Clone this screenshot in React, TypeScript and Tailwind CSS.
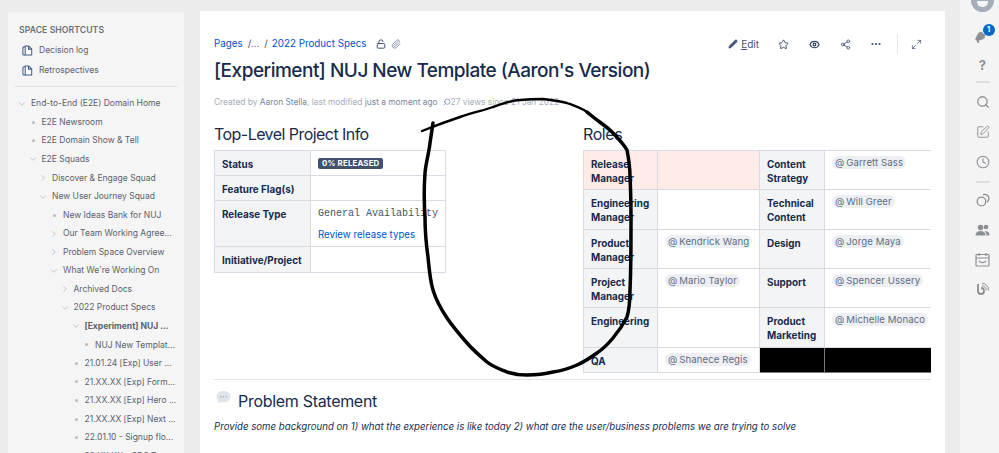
import React from "react";
import { ChevronDown, ChevronRight, Pencil, Star, Eye, Share2, MoreHorizontal, Maximize2, Search, SquarePen, Clock, Paperclip, LockOpen } from "lucide-react";

type Row = { t: string; d: number; k: "o" | "c" | "b"; bold?: boolean };
const rows: Row[] = [
  { t: "End-to-End (E2E) Domain Home", d: 0, k: "o" },
  { t: "E2E Newsroom", d: 1, k: "b" },
  { t: "E2E Domain Show & Tell", d: 1, k: "b" },
  { t: "E2E Squads", d: 1, k: "o" },
  { t: "Discover & Engage Squad", d: 2, k: "c" },
  { t: "New User Journey Squad", d: 2, k: "o" },
  { t: "New Ideas Bank for NUJ", d: 3, k: "b" },
  { t: "Our Team Working Agree...", d: 3, k: "c" },
  { t: "Problem Space Overview", d: 3, k: "c" },
  { t: "What We're Working On", d: 3, k: "o" },
  { t: "Archived Docs", d: 4, k: "c" },
  { t: "2022 Product Specs", d: 4, k: "o" },
  { t: "[Experiment] NUJ ...", d: 5, k: "o", bold: true },
  { t: "NUJ New Templat...", d: 6, k: "b" },
  { t: "21.01.24 [Exp] User ...", d: 5, k: "b" },
  { t: "21.XX.XX [Exp] Form...", d: 5, k: "b" },
  { t: "21.XX.XX [Exp] Hero ...", d: 5, k: "b" },
  { t: "21.XX.XX [Exp] Next ...", d: 5, k: "b" },
  { t: "22.01.10 - Signup flo...", d: 5, k: "b" },
  { t: "22.XX.XX - SDS Tr...", d: 5, k: "b" },
];

const pad: Record<number, string> = {
  0: "pl-[23px]",
  1: "pl-[33.5px]",
  2: "pl-[44px]",
  3: "pl-[55px]",
  4: "pl-[65.5px]",
  5: "pl-[76.5px]",
  6: "pl-[87px]",
};

function PagesIcon() {
  return (
    <svg width="11" height="11" viewBox="0 0 12 12" fill="none" stroke="#42598a" strokeWidth="1.1">
      <path d="M3.5 2H2.2Q1 2 1 3.2v6.6Q1 11 2.2 11h1.3" />
      <path d="M3.5 1.2h3.8L10.6 4.3v6.7H3.5z" fill="#fff" />
      <path d="M7 1.2v3.3h3.6" />
    </svg>
  );
}

function Side() {
  return (
    <aside className="ml-[8px] mt-[12px] w-[176px] h-[441px] bg-[#f5f5f6] overflow-hidden border-t border-[#f0f0f1]">
      <div className="pl-[11px] pt-[10px] h-[14px] box-content text-[8.6px] font-semibold text-[#6b6f76] tracking-[0.1px] leading-[14px]">SPACE SHORTCUTS</div>
      <div className="mt-[3px] flex flex-col">
        {["Decision log", "Retrospectives"].map((t) => (
          <div key={t} className="h-[20.5px] flex items-center pl-[14px] gap-[6px] text-[8.5px] text-[#5c616a]">
            <PagesIcon />
            <span>{t}</span>
          </div>
        ))}
      </div>
      <div className="mx-[7px] mt-[5px] h-px bg-[#dfe1e4]" />
      <div className="mt-[7.5px] flex flex-col">
        {rows.map((r) => (
          <div key={r.t} className={`relative h-[18.56px] shrink-0 flex items-center whitespace-nowrap text-[8.5px] text-[#5c616a] ${pad[r.d]} ${r.bold ? "font-bold" : ""}`}>
            <span className="absolute -ml-[14px] w-[10px] h-[10px] flex items-center justify-center text-[#9a9ea5]">
              {r.k === "o" && <ChevronDown size={10} strokeWidth={1.3} />}
              {r.k === "c" && <ChevronRight size={10} strokeWidth={1.3} />}
              {r.k === "b" && <span className="ml-[1px] w-[3px] h-[3px] rounded-full bg-[#b9bcc1]" />}
            </span>
            <span>{r.t}</span>
          </div>
        ))}
      </div>
    </aside>
  );
}

function Th({ children, className = "" }: { children?: React.ReactNode; className?: string }) {
  return <td className={`border border-[#d8dbe3] bg-[#f3f4f6] pl-[7px] pr-[2px] pt-[6px] align-top font-bold text-[#172b4d] text-[9.9px] leading-[14px] ${className}`}>{children}</td>;
}
function Td({ children, className = "" }: { children?: React.ReactNode; className?: string }) {
  return <td className={`border border-[#d8dbe3] pl-[7px] pt-[5px] align-top text-[#42526e] text-[9.7px] leading-[14px] ${className}`}>{children}</td>;
}
function Mention({ n }: { n: string }) {
  return <span className="inline-block whitespace-nowrap rounded-[7px] bg-[#eeeff2] px-[3px] h-[13px] leading-[13px] text-[9.6px] tracking-[0.1px] text-[#5e6c84]">@{"\u2009"}{n}</span>;
}

function LeftTable() {
  return (
    <table className="w-[232px] mt-[4px] border-collapse table-fixed">
      <colgroup>
        <col className="w-[96px]" />
        <col />
      </colgroup>
      <tbody>
        <tr className="h-[25px]">
          <Th>Status</Th>
          <Td className="pt-[7px]">
            <span className="inline-block h-[11px] rounded-[2px] bg-[#42526e] px-[4px] text-[7.8px] leading-[11px] font-bold text-white tracking-[0.2px] align-top">0% RELEASED</span>
          </Td>
        </tr>
        <tr className="h-[25px]">
          <Th>Feature Flag(s)</Th>
          <Td />
        </tr>
        <tr className="h-[46px]">
          <Th>Release Type</Th>
          <Td className="pt-[6px]">
            <div className="font-['Liberation_Mono',monospace] text-[#42526e] text-[10px] whitespace-nowrap leading-[14px]">General Availability</div>
            <div className="mt-[7px] text-[#0052cc]">Review release types</div>
          </Td>
        </tr>
        <tr className="h-[26px]">
          <Th>Initiative/Project</Th>
          <Td />
        </tr>
      </tbody>
    </table>
  );
}

function RightTable() {
  return (
    <div className="w-[348px] overflow-hidden mt-[4px]">
      <table className="w-[360px] border-collapse table-fixed">
        <colgroup>
          <col className="w-[74px]" />
          <col className="w-[102px]" />
          <col className="w-[65px]" />
          <col />
        </colgroup>
        <tbody>
          <tr className="h-[39px]">
            <Th className="!bg-[#ffebe6]">Release<br />Manager</Th>
            <Td className="bg-[#ffebe6]" />
            <Th>Content<br />Strategy</Th>
            <Td><Mention n="Garrett Sass" /></Td>
          </tr>
          <tr className="h-[39.5px]">
            <Th>Engineering<br />Manager</Th>
            <Td />
            <Th>Technical<br />Content</Th>
            <Td><Mention n="Will Greer" /></Td>
          </tr>
          <tr className="h-[39.5px]">
            <Th>Product<br />Manager</Th>
            <Td><Mention n="Kendrick Wang" /></Td>
            <Th>Design</Th>
            <Td><Mention n="Jorge Maya" /></Td>
          </tr>
          <tr className="h-[39px]">
            <Th>Project<br />Manager</Th>
            <Td><Mention n="Mario Taylor" /></Td>
            <Th>Support</Th>
            <Td><Mention n="Spencer Ussery" /></Td>
          </tr>
          <tr className="h-[39.5px]">
            <Th>Engineering</Th>
            <Td />
            <Th>Product<br />Marketing</Th>
            <Td><Mention n="Michelle Monaco" /></Td>
          </tr>
          <tr className="h-[25.5px]">
            <Th>QA</Th>
            <Td><Mention n="Shanece Regis" /></Td>
            <td className="bg-black border border-[#777]" />
            <td className="bg-black border border-[#777]" />
          </tr>
        </tbody>
      </table>
    </div>
  );
}

function Main() {
  return (
    <main className="ml-[16px] mt-[11px] w-[745px] h-[442px] bg-white px-[14px] overflow-hidden">
      <div className="mt-[25px] h-[16px] flex items-center text-[9.8px] text-[#0052cc] whitespace-nowrap">
        <span>Pages</span>
        <span className="ml-[5px] text-[#42526e]">/...</span>
        <span className="ml-[5px] text-[#42526e]">/</span>
        <span className="ml-[4px]">2022 Product Specs</span>
        <LockOpen size={10} strokeWidth={2.4} className="ml-[10px] text-[#42526e]" />
        <Paperclip size={10} strokeWidth={2} className="ml-[5px] text-[#7a869a]" />
        <div className="ml-auto mr-[9px] flex items-center text-[#42526e]">
          <Pencil size={10} fill="#42526e" strokeWidth={1.5} className="mr-[3px]" />
          <span className="underline-offset-1 text-[10px]"><span className="underline">E</span>dit</span>
          <Star size={11} strokeWidth={1.8} className="ml-[19px] text-[#253858]" />
          <Eye size={11} strokeWidth={2.4} className="ml-[20px] text-[#253858]" />
          <Share2 size={11} strokeWidth={1.8} className="ml-[20px] text-[#42526e]" />
          <MoreHorizontal size={12} strokeWidth={2.4} className="ml-[19px] text-[#42526e]" />
          <span className="ml-[15px] w-px h-[21px] bg-[#e4e6ea]" />
          <Maximize2 size={11} strokeWidth={1.6} className="ml-[13px] text-[#42526e]" />
        </div>
      </div>
      <h1 className="mt-[6px] h-[26px] leading-[26px] text-[19px] tracking-[-0.5px] font-medium text-[#172b4d] whitespace-nowrap">[Experiment] NUJ New Template (Aaron's Version)</h1>
      <div className="mt-[12px] h-[12px] leading-[12px] flex items-center text-[8.35px] text-[#a5adba] whitespace-nowrap">
        <span>Created by&nbsp;</span>
        <span className="text-[#7a869a]">Aaron Stella</span>
        <span>, last modified&nbsp;</span>
        <span className="text-[#7a869a]">just a moment ago</span>
        <Search size={8} strokeWidth={2} className="ml-[5px] -scale-x-100 text-[#5b7fc7]" />
        <span>27 views since 21 Jan 2022</span>
      </div>
      <div className="mt-[14px] flex">
        <section className="w-[369px]">
          <h2 className="h-[24px] leading-[24px] text-[16px] tracking-[-0.55px] text-[#172b4d] whitespace-nowrap">Top-Level Project Info</h2>
          <LeftTable />
        </section>
        <section>
          <h2 className="h-[24px] leading-[24px] text-[16px] tracking-[-0.4px] text-[#172b4d]">Roles</h2>
          <RightTable />
        </section>
      </div>
      <div className="mt-[6px] h-px bg-[#e2e3e6] w-[717px]" />
      <div className="mt-[9px] h-[24px] flex items-center">
        <svg width="17" height="16" viewBox="0 0 15 15" className="mr-[6px] ml-[1px] -mt-[6px]">
          <path d="M7.5 1C11 1 14 3.2 14 6.3S11 11.6 7.5 11.600c-.8 0-1.500-.1-2.200-.3L2.600 13l.4-2.900C1.800 9.100 1 7.800 1 6.300 1 3.200 4 1 7.500 1z" fill="#dfe5e9" />
          <circle cx="5" cy="6.300" r=".6" fill="#9aa6b0" />
          <circle cx="7.500" cy="6.300" r=".6" fill="#9aa6b0" />
          <circle cx="10" cy="6.300" r=".6" fill="#9aa6b0" />
        </svg>
        <h2 className="text-[16px] tracking-[-0.3px] text-[#172b4d] whitespace-nowrap">Problem Statement</h2>
      </div>
      <p className="mt-[7px] h-[14px] leading-[14px] italic text-[9.67px] text-[#172b4d] whitespace-nowrap">Provide some background on 1) what the experience is like today 2) what are the user/business problems we are trying to solve</p>
    </main>
  );
}

function Nav() {
  const c = "#8b8f94";
  return (
    <nav className="ml-[15px] w-[39px] h-[453px] pl-[6px] bg-[#f4f4f5] flex flex-col items-center relative">
      <div className="h-[12px] w-[23px] rounded-b-full bg-[#a5adba] flex justify-center overflow-hidden">
        <span className="mt-[1px] w-[11px] h-[6px] rounded-b-[5px] bg-[#f4f4f5]" />
      </div>
      <div className="relative mt-[15px] h-[16px] w-[16px] flex items-center justify-center">
        <svg width="15" height="15" viewBox="0 0 14 14" fill={c} className="-ml-[4px] mt-[3px]">
          <path d="M5 3.500l5.500 5.500-6.500 2.500-2-2z" />
          <path d="M5 3.500l3-1 3.500 3.500-1 3z" />
          <path d="M3.500 11.500l1.800-.7.700 1.700-1.500.5z" />
        </svg>
        <span className="absolute left-[8px] -top-[3px] w-[12px] h-[12px] rounded-full bg-[#0c66c2] text-white text-[7.5px] leading-[12px] text-center font-bold">1</span>
      </div>
      <span className="mt-[13px] h-[18px] leading-[18px] text-[13px] font-bold text-[#8b8f94]">?</span>
      <span className="mt-[7px] w-[14px] h-[2px] rounded bg-[#dcdde0]" />
      <Search size={14} strokeWidth={2.2} color={c} className="mt-[12px]" />
      <SquarePen size={14} strokeWidth={1.6} color={c} className="mt-[16px]" />
      <Clock size={14} strokeWidth={1.8} color={c} className="mt-[16px]" />
      <span className="mt-[12px] w-[14px] h-[2px] rounded bg-[#dcdde0]" />
      <svg width="14" height="14" viewBox="0 0 14 14" fill="none" stroke={c} strokeWidth="1.3" className="mt-[10px]">
        <circle cx="5.500" cy="8.500" r="4.300" />
        <path d="M7 1.800a4.300 4.300 0 0 1 6 3.800 4.300 4.300 0 0 1-2.200 3.700" />
      </svg>
      <svg width="15" height="14" viewBox="0 0 15 14" fill={c} className="mt-[16px]">
        <circle cx="5.500" cy="4.500" r="2.800" />
        <path d="M.5 12.500c0-3 2-4.500 5-4.500s5 1.500 5 4.500z" />
        <circle cx="11" cy="4" r="2.300" />
        <path d="M11.500 12.500h3c0-3-1.400-4.300-3.700-4.300-.5 0-.9 0-1.300.2 1.300 1 2 2.300 2 4.100z" />
      </svg>
      <svg width="15" height="15" viewBox="0 0 15 15" fill="none" stroke={c} strokeWidth="1.2" className="mt-[15px]">
        <rect x="1" y="2.500" width="13" height="11.500" rx="1" />
        <path d="M1 6h13M4 1v3M11 1v3" />
        <path d="M4 9c2 2 5 2 7 0" strokeWidth="1.400" />
      </svg>
      <svg width="14" height="14" viewBox="0 0 14 14" fill="none" stroke={c} strokeWidth="1.5" className="mt-[15px]">
        <path d="M2 2v7a3 3 0 1 0 3-3" strokeWidth="1.800" />
        <path d="M6 1.500a6.500 6.500 0 0 1 6.500 7" strokeWidth="1" />
        <path d="M6 4a4 4 0 0 1 4.200 4.500" strokeWidth="1" />
      </svg>
    </nav>
  );
}

export default function App() {
  return (
    <div className="relative flex w-[999px] h-[453px] overflow-hidden bg-[#ececec] font-['Inter',sans-serif]">
      <Side />
      <Main />
      <Nav />
      <svg width="999" height="453" viewBox="0 0 999 453" fill="none" stroke="#000" strokeLinecap="round" strokeLinejoin="round" className="absolute left-0 top-0 pointer-events-none">
        <path strokeWidth="2.4" d="M422 131C432 127 445 122 460 117C475 112 485 110 493 107C505 103 512 100 520 100C530 99 537 99 543 99C552 100 560 101 567 103C575 106 581 108 587 112" />
        <path strokeWidth="3.5" d="M587 112C595 119 603 124 610 130C617 137 623 143 627 150C629 160 630 168 630 177C631 195 631 210 631 223C631 245 631 270 630 290C630 302 629 310 627 317C623 325 618 332 613 338C608 344 603 349 597 353C590 358 584 362 577 365C570 368 562 371 553 372C545 374 536 375 527 375C519 375 513 374 507 372C500 369 493 367 487 362C480 356 473 350 467 343C460 335 453 327 447 318C441 309 436 300 433 290C430 280 429 268 428 257C426 243 425 230 425 217C424 202 424 187 425 173C426 162 429 153 430 143C431 136 432 130 433 123" />
      </svg>
    </div>
  );
}
